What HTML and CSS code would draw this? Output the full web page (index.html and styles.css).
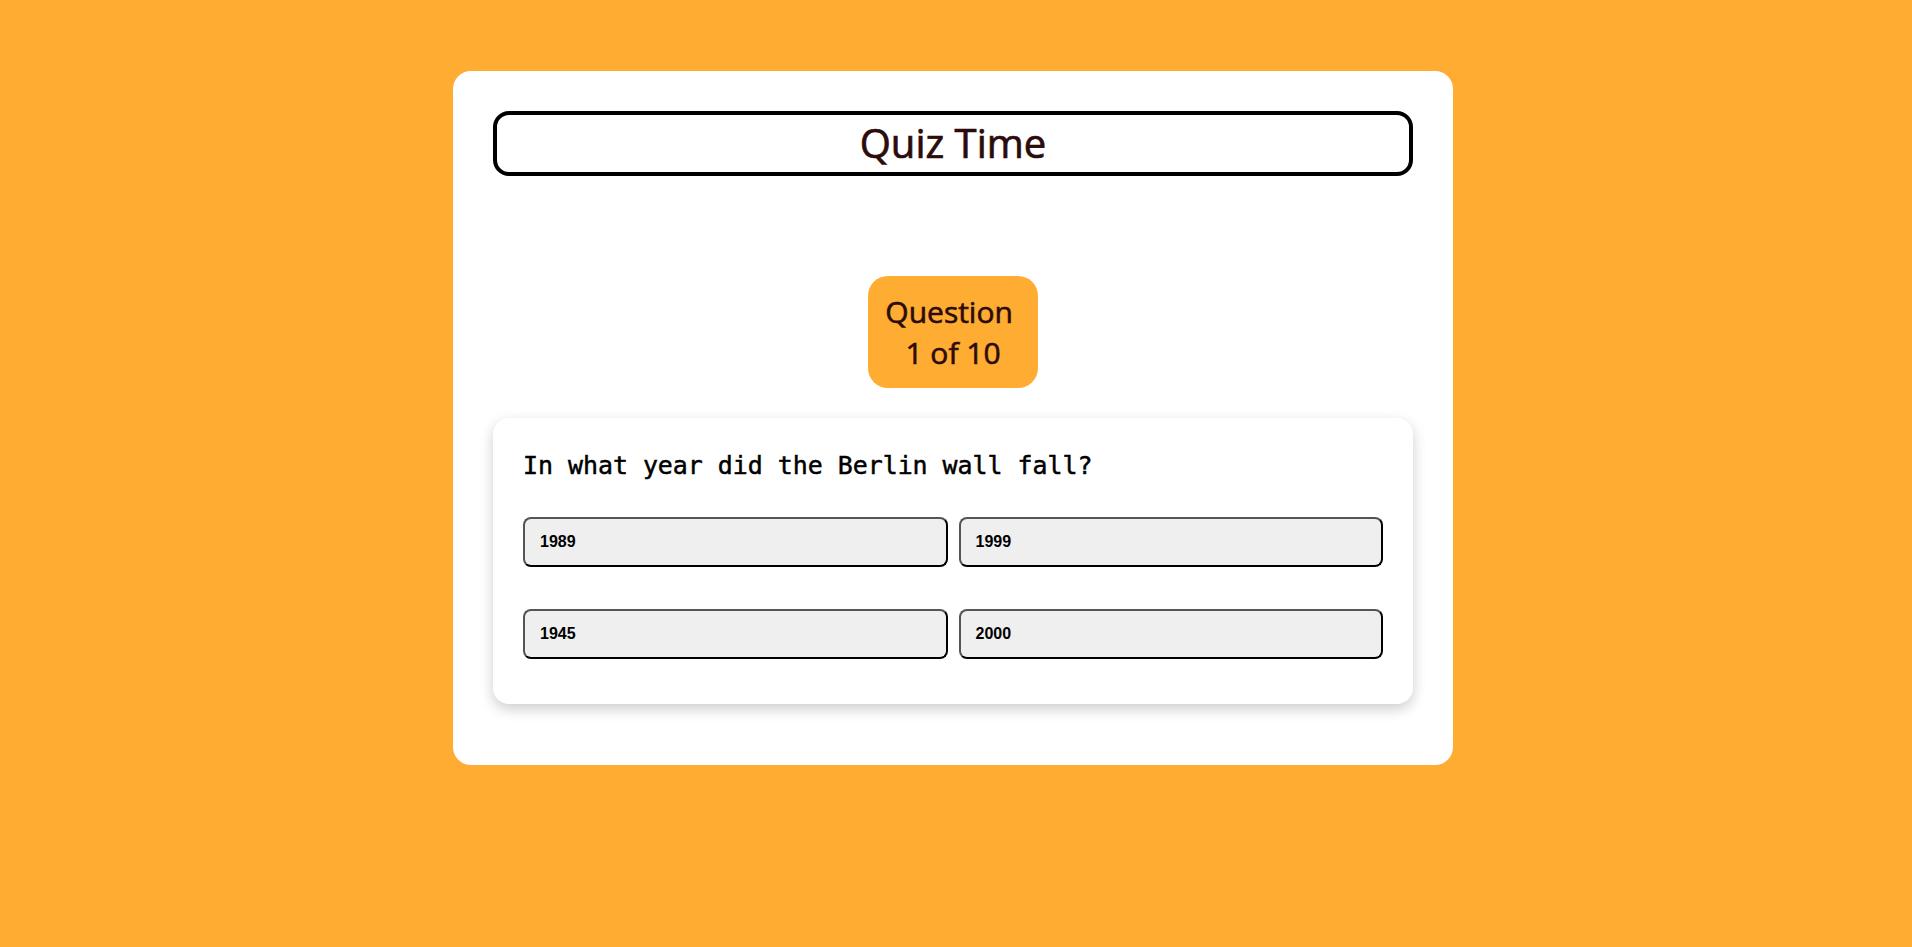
FILE: index.html
```html
<!DOCTYPE html>
<html lang="en">
<head>
<meta charset="utf-8">
<title>Quiz Time</title>
<link rel="stylesheet" href="styles.css">
</head>
<body>
<main class="page">
  <section class="quiz-card">
    <h1 class="quiz-title">Quiz Time</h1>
    <div class="progress">Question&nbsp;<br>1 of 10</div>
    <div class="question-card">
      <h2 class="question-text">In what year did the Berlin wall fall?</h2>
      <div class="answers">
        <button class="answer">1989</button>
        <button class="answer">1999</button>
        <button class="answer">1945</button>
        <button class="answer">2000</button>
      </div>
    </div>
  </section>
</main>
</body>
</html>
```

FILE: styles.css
```css
* {
  box-sizing: border-box;
}

html, body {
  margin: 0;
  padding: 0;
  height: 100%;
}

body {
  background: #ffac33;
  font-family: "Open Sans", "Liberation Sans", sans-serif;
}

.page {
  display: flex;
  justify-content: center;
  padding: 71px 6px 0 0;
}

.quiz-card {
  width: 1000px;
  height: 694px;
  background: #ffffff;
  border-radius: 18px;
  padding: 40px 40px 0;
  display: flex;
  flex-direction: column;
  align-items: center;
}

.quiz-title {
  width: 920px;
  height: 65px;
  margin: 0;
  border: 4px solid #000;
  border-radius: 16px;
  font-size: 40px;
  font-weight: 400;
  -webkit-text-stroke: 0.7px #2b0b0b;
  line-height: 55px;
  text-align: center;
  color: #2b0b0b;
}

.progress {
  margin-top: 100px;
  width: 170px;
  height: 112px;
  padding: 15px 0;
  background: #ffac33;
  border-radius: 20px;
  font-size: 30px;
  font-weight: 400;
  -webkit-text-stroke: 0.6px #2b0b0b;
  line-height: 41px;
  text-align: center;
  color: #2b0b0b;
}

.question-card {
  margin-top: 30px;
  width: 920px;
  background: #ffffff;
  border-radius: 16px;
  box-shadow: 0 5px 14px rgba(0, 0, 0, 0.2);
  padding: 30px 30px 45px;
}

.question-text {
  margin: 0 0 34px;
  font-family: "DejaVu Sans Mono", "Liberation Mono", monospace;
  font-size: 24.9px;
  font-weight: 400;
  -webkit-text-stroke: 0.5px #000;
  line-height: 35px;
  color: #000;
}

.answers {
  display: grid;
  grid-template-columns: 1fr 1fr;
  column-gap: 11px;
  row-gap: 42px;
}

.answer {
  height: 50px;
  padding: 0 15px;
  text-align: left;
  background: #efefef;
  border: 2px solid;
  border-color: #555 #000 #000 #555;
  border-radius: 8px;
  font-family: "Liberation Sans", Arial, sans-serif;
  font-size: 16px;
  font-weight: 700;
  color: #000;
}
```
